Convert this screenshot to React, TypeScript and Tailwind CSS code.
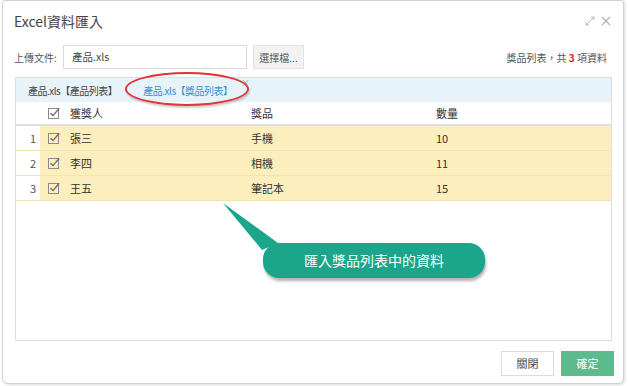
import type { ReactNode } from "react";

const rows = [
  { n: 1, name: "張三", prize: "手機", qty: 10 },
  { n: 2, name: "李四", prize: "相機", qty: 11 },
  { n: 3, name: "王五", prize: "筆記本", qty: 15 },
];

function CheckBox() {
  return (
    <svg width="12" height="12" viewBox="0 0 12 12" aria-hidden="true">
      <rect x="0.5" y="1.5" width="10" height="10" fill="none" stroke="#8a8a8a" strokeWidth="1" />
      <path d="M2.5 6.2 L5 8.6 L11.2 1.2" fill="none" stroke="#6f6f6f" strokeWidth="1.4" />
    </svg>
  );
}

function Row({ children, className }: { children: ReactNode; className?: string }) {
  return (
    <div className={`grid grid-cols-[24px_26px_181px_185px_1fr] items-center ${className ?? ""}`}>
      {children}
    </div>
  );
}

export default function App() {
  return (
    <div
      className="relative h-[386px] w-[628px] overflow-hidden bg-white text-[#333]"
      style={{ fontFamily: '"Noto Sans CJK TC", "Noto Sans", sans-serif' }}
    >
      <div className="ml-[2px] flex h-[384px] w-[622px] flex-col rounded-b-[6px] rounded-t-[3px] border border-[#d2d2d2] bg-white shadow-[1px_1px_3px_rgba(0,0,0,0.15)]">
        {/* title */}
        <div className="flex h-[40px] items-center justify-between pl-[11px] pr-[12px]">
          <span className="text-[14px] text-[#444]">Excel資料匯入</span>
          <div className="flex items-center gap-[6px]">
            <svg width="10" height="10" viewBox="0 0 10 10" aria-hidden="true">
              <path d="M1 9 L9 1 M6 1 H9 V4 M1 6 V9 H4" fill="none" stroke="#b8b8b8" strokeWidth="1" />
            </svg>
            <svg width="10" height="10" viewBox="0 0 10 10" aria-hidden="true">
              <path d="M1 1 L9 9 M9 1 L1 9" stroke="#b0b0b0" strokeWidth="1.1" />
            </svg>
          </div>
        </div>

        {/* upload row */}
        <div className="mt-[4px] flex h-[24px] items-center pl-[11px] pr-[16px] text-[10.5px]">
          <span className="w-[49px] text-[10px] text-[#555]">上傳文件:</span>
          <div className="flex h-[24px] w-[184px] items-center border border-[#d9d9d9] px-[8px] text-[#444]">產品.xls</div>
          <div className="ml-[6px] flex h-[24px] w-[51px] items-center justify-center border border-[#e2e2e2] bg-[#f2f2f2] text-[10px] text-[#555]">
            選擇檔...
          </div>
          <span className="ml-auto text-[10px] text-[#555]">
            獎品列表，共 <b className="text-[#e0262b]">3</b> 項資料
          </span>
        </div>

        {/* table panel */}
        <div className="ml-[12px] mt-[8px] flex h-[264px] w-[597px] flex-col border border-[#dcdcdc]">
          <div className="flex h-[24px] items-center gap-[26px] bg-[#e6f3f8] pl-[12px] text-[10px] tracking-[-0.5px]">
            <span className="text-[#444]">產品.xls【產品列表】</span>
            <span className="relative text-[#3c8fd0]">
              產品.xls【獎品列表】
              <span className="absolute -right-[17px] -top-[7px] text-[9px] text-[#999]">×</span>
            </span>
          </div>
          <Row className="h-[24px] border-b-2 border-[#dedede] text-[11px]">
            <span />
            <span className="flex justify-center pl-[2px]">
              <CheckBox />
            </span>
            <span className="px-[4px]">獲獎人</span>
            <span className="px-[4px]">獎品</span>
            <span className="px-[4px]">數量</span>
          </Row>
          {rows.map((r) => (
            <Row key={r.n} className="h-[25px] border-b border-[#f0e3b4] text-[11px]">
              <span className="flex h-full items-center justify-end bg-white pr-[4px] text-[#555]">{r.n}</span>
              <span className="flex h-full items-center justify-center bg-[#fdefbd] pl-[2px]">
                <CheckBox />
              </span>
              <span className="flex h-full items-center bg-[#fdefbd] px-[4px]">{r.name}</span>
              <span className="flex h-full items-center bg-[#fdefbd] px-[4px]">{r.prize}</span>
              <span className="flex h-full items-center bg-[#fdefbd] px-[4px]">{r.qty}</span>
            </Row>
          ))}
        </div>

        {/* footer */}
        <div className="mt-[10px] flex justify-end gap-[7px] pr-[9px]">
          <button className="h-[25px] w-[53px] border border-[#dcdcdc] bg-white text-[11px] text-[#444]">關閉</button>
          <button className="h-[25px] w-[53px] bg-[#5cba8d] text-[11px] text-white">確定</button>
        </div>
      </div>

      {/* red highlight ellipse */}
      <div className="absolute left-[125px] top-[72px] h-[34px] w-[124px] rounded-[50%] border-2 border-[#e0353b] shadow-[1px_2px_2px_rgba(0,0,0,0.2)]" />

      {/* callout */}
      <svg className="absolute left-[218px] top-[200px]" width="70" height="60" viewBox="0 0 70 60" aria-hidden="true">
        <polygon points="5,3 44,50 60,43" fill="#1ba68b" />
      </svg>
      <div className="absolute left-[263px] top-[243px] flex h-[35px] w-[222px] items-center justify-center rounded-[16px] bg-[#1ba68b] text-[14px] text-white shadow-[1px_3px_3px_rgba(0,0,0,0.3)]">
        匯入獎品列表中的資料
      </div>
    </div>
  );
}
